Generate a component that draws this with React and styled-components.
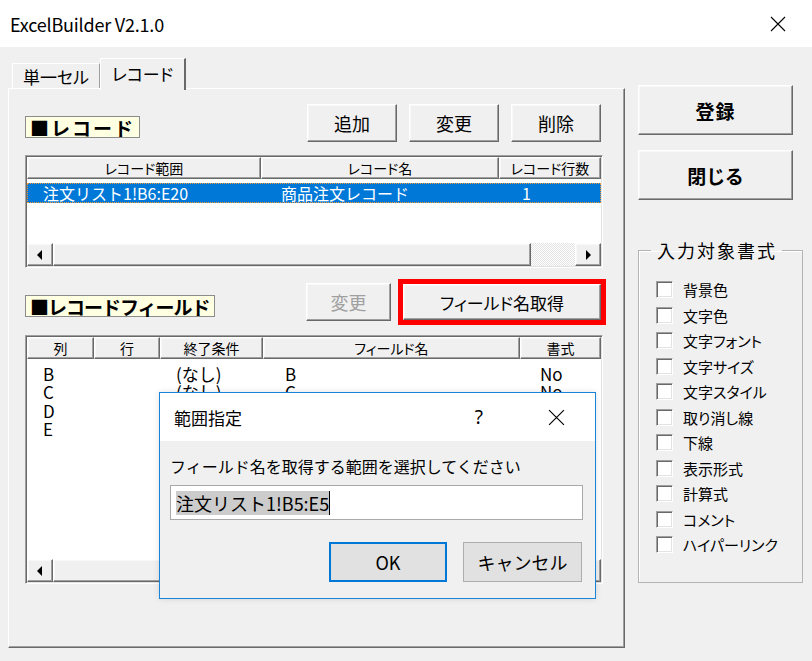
import React from "react";
import styled, { createGlobalStyle, css } from "styled-components";

const GlobalStyle = createGlobalStyle`
  html, body {
    margin: 0;
    padding: 0;
    background: #f0f0f0;
  }
  body {
    font-family: "Noto Sans CJK JP", "Noto Sans", sans-serif;
    color: #000;
  }
  * {
    box-sizing: border-box;
  }
`;

// classic 3D edges
const raised = css`
  border: 1px solid;
  border-color: #ffffff #696969 #696969 #ffffff;
  box-shadow: inset -1px -1px 0 #a0a0a0, inset 1px 1px 0 #f8f8f8;
  background: #f0f0f0;
`;

const sunken = css`
  border: 1px solid;
  border-color: #a0a0a0 #ffffff #ffffff #a0a0a0;
  box-shadow: inset 1px 1px 0 #696969, inset -1px -1px 0 #e3e3e3;
  padding: 1px;
`;

const Window = styled.div`
  position: relative;
  width: 812px;
  height: 661px;
  background: #f0f0f0;
  overflow: hidden;
`;

const TitleBar = styled.div`
  height: 47px;
  background: #ffffff;
  display: flex;
  align-items: center;
  justify-content: space-between;
  padding: 0 26px 0 10px;
`;

const TitleText = styled.span`
  font-size: 18px;
  letter-spacing: -0.2px;
`;

const Main = styled.div`
  display: flex;
  align-items: flex-start;
  padding: 11px 0 0 8px;
`;

const LeftPane = styled.div`
  width: 617px;
  display: flex;
  flex-direction: column;
`;

const TabStrip = styled.div`
  position: relative;
  z-index: 1;
  display: flex;
  align-items: flex-end;
  height: 30px;
  padding-left: 4px;
`;

const Tab = styled.div`
  display: flex;
  align-items: center;
  justify-content: center;
  width: ${(p) => p.$w}px;
  font-size: 17px;
  font-feature-settings: "palt";
  background: #f0f0f0;
  border: 1px solid;
  border-bottom: none;
  border-color: #ffffff #a0a0a0 transparent #ffffff;
  ${(p) =>
    p.$active
      ? css`
          height: 32px;
          margin-bottom: -2px;
          border-right: 2px solid #696969;
          padding-bottom: 3px;
        `
      : css`
          height: 25px;
          padding-top: 1px;
        `}
`;

const TabPanel = styled.div`
  width: 617px;
  height: 560px;
  border: 1px solid;
  border-color: #ffffff #696969 #696969 #ffffff;
  box-shadow: inset -1px -1px 0 #a0a0a0;
  padding: 15px 21px 0 16px;
  display: flex;
  flex-direction: column;
`;

const SectionRow = styled.div`
  display: flex;
  justify-content: space-between;
  align-items: center;
  height: ${(p) => p.$h}px;
  margin-top: ${(p) => p.$top}px;
  margin-right: ${(p) => p.$right}px;
`;

const SectionLabel = styled.div`
  align-self: flex-end;
  margin-bottom: ${(p) => p.$bottom}px;
  height: 22px;
  padding: 0 4px 0 4px;
  display: flex;
  align-items: center;
  background: #ffffe1;
  border: 1px solid #8c8c8c;
  font-size: 19px;
  font-weight: 700;
  line-height: 1;
  letter-spacing: ${(p) => p.$spacing}px;
`;

const ButtonGroup = styled.div`
  display: flex;
  align-items: center;
  gap: ${(p) => p.$gap}px;
`;

const ClassicButton = styled.div`
  ${raised};
  width: ${(p) => p.$w}px;
  height: ${(p) => p.$h}px;
  display: flex;
  align-items: center;
  justify-content: center;
  font-size: ${(p) => p.$size || 18}px;
  font-feature-settings: "palt";
  color: ${(p) => (p.$disabled ? "#a0a0a0" : "#000")};
  font-weight: ${(p) => (p.$bold ? 700 : 400)};
`;

const RedFrame = styled.div`
  border: 5px solid #ff0000;
  display: flex;
`;

const ListView = styled.div`
  ${sunken};
  margin-top: ${(p) => p.$top}px;
  height: ${(p) => p.$h}px;
  background: #ffffff;
  display: flex;
  flex-direction: column;
`;

const ListHeader = styled.div`
  display: flex;
  height: 22px;
  flex: none;
`;

const HeaderCell = styled.div`
  ${raised};
  width: ${(p) => p.$w}px;
  display: flex;
  align-items: center;
  justify-content: center;
  font-size: 14px;
  font-feature-settings: "palt";
  line-height: 1;
`;

const ListBody = styled.div`
  flex: 1;
  padding-top: ${(p) => p.$pad}px;
  display: flex;
  flex-direction: column;
`;

const ListRow = styled.div`
  display: flex;
  height: ${(p) => p.$h}px;
  align-items: center;
  ${(p) =>
    p.$selected &&
    css`
      background: #0078d7;
      color: #ffffff;
      outline: 1px dotted #f39a3c;
      outline-offset: -1px;
    `}
`;

const Cell = styled.div`
  width: ${(p) => p.$w}px;
  padding-left: ${(p) => p.$pad}px;
  font-size: ${(p) => p.$size}px;
  white-space: nowrap;
  line-height: 1;
`;

const HScroll = styled.div`
  display: flex;
  height: 23px;
  flex: none;
`;

const ScrollArrow = styled.div`
  ${raised};
  width: 26px;
  display: flex;
  align-items: center;
  justify-content: center;
`;

const ScrollThumb = styled.div`
  ${raised};
  width: ${(p) => p.$w}px;
`;

const ScrollTrack = styled.div`
  flex: 1;
  background: repeating-conic-gradient(#ffffff 0 25%, #e3e3e3 0 50%) 0 0 / 2px 2px;
`;

const RightPane = styled.div`
  width: 165px;
  margin-left: 13px;
  padding-top: 27px;
  display: flex;
  flex-direction: column;
`;

const BigButton = styled(ClassicButton)`
  margin-top: ${(p) => p.$top}px;
  letter-spacing: 1px;
`;

const GroupBox = styled.fieldset`
  margin: 40px 0 0 0;
  height: 343px;
  width: 165px;
  border: 1px solid #b4b4b4;
  box-shadow: 1px 1px 0 #ffffff inset;
  padding: 17px 0 0 17px;
`;

const Legend = styled.legend`
  margin-left: -5px;
  padding: 0 5px 0 6px;
  font-size: 18px;
  line-height: 20px;
  letter-spacing: 2px;
`;

const CheckRow = styled.div`
  display: flex;
  align-items: center;
  height: 25.5px;
`;

const CheckBox = styled.span`
  ${sunken};
  width: 17px;
  height: 17px;
  background: #ffffff;
  flex: none;
`;

const CheckLabel = styled.span`
  margin-left: 10px;
  font-size: 15px;
  font-feature-settings: "palt";
  line-height: 1;
`;

const Dialog = styled.div`
  position: absolute;
  left: 159px;
  top: 392px;
  width: 437px;
  height: 207px;
  border: 1px solid #1883d7;
  background: #f0f0f0;
  box-shadow: 0 0 6px rgba(0, 0, 0, 0.12);
  display: flex;
  flex-direction: column;
`;

const DialogTitle = styled.div`
  height: 48px;
  flex: none;
  background: #ffffff;
  display: flex;
  align-items: center;
  padding: 0 30px 0 14px;
  font-size: 17px;
`;

const DialogTitleText = styled.span`
  flex: 1;
`;

const HelpGlyph = styled.span`
  font-size: 19px;
  font-family: "Noto Sans", sans-serif;
  margin-right: 65px;
`;

const DialogBody = styled.div`
  padding: 13px 12px 0 10px;
  display: flex;
  flex-direction: column;
`;

const DialogLabel = styled.div`
  font-size: 16px;
  line-height: 24px;
`;

const DialogInput = styled.div`
  margin-top: 7px;
  width: 413px;
  height: 35px;
  background: #ffffff;
  border: 1px solid #a9a9a9;
  display: flex;
  align-items: center;
  padding-left: 5px;
  font-size: 18px;
`;

const Selection = styled.span`
  background: #cccccc;
  line-height: 24px;
`;

const Caret = styled.span`
  width: 1px;
  height: 24px;
  background: #000;
`;

const DialogButtons = styled.div`
  display: flex;
  justify-content: flex-end;
  gap: 16px;
  margin-top: 22px;
  padding-right: 1px;
`;

const DialogButton = styled.div`
  width: ${(p) => p.$w}px;
  height: 40px;
  background: #e1e1e1;
  border: ${(p) => (p.$primary ? "2px solid #0078d7" : "1px solid #adadad")};
  display: flex;
  align-items: center;
  justify-content: center;
  font-size: 18px;
`;

const CloseIcon = ({ size = 16 }) => (
  <svg width={size} height={size} viewBox="0 0 16 16">
    <path d="M1 1 L15 15 M15 1 L1 15" stroke="#000" strokeWidth="1.1" fill="none" />
  </svg>
);

const Arrow = ({ dir }) => (
  <svg width="6" height="10" viewBox="0 0 6 10">
    {dir === "left" ? <polygon points="5,0 5,10 0,5" fill="#000" /> : <polygon points="1,0 1,10 6,5" fill="#000" />}
  </svg>
);

const Scrollbar = ({ thumb }) => (
  <HScroll>
    <ScrollArrow>
      <Arrow dir="left" />
    </ScrollArrow>
    <ScrollThumb $w={thumb} />
    <ScrollTrack />
    <ScrollArrow>
      <Arrow dir="right" />
    </ScrollArrow>
  </HScroll>
);

const recordCols = [
  { name: "レコード範囲", w: 234, pad: 16 },
  { name: "レコード名", w: 238, pad: 20 },
  { name: "レコード行数", w: 102, pad: 23 }
];

const fieldCols = [
  { name: "列", w: 67, pad: 16 },
  { name: "行", w: 66, pad: 16 },
  { name: "終了条件", w: 103, pad: 16 },
  { name: "フィールド名", w: 257, pad: 22 },
  { name: "書式", w: 81, pad: 20 }
];

const fields = [
  ["B", "", "(なし)", "B", "No"],
  ["C", "", "(なし)", "C", "No"],
  ["D", "", "(なし)", "D", "No"],
  ["E", "", "(なし)", "E", "No"]
];

const formats = [
  "背景色",
  "文字色",
  "文字フォント",
  "文字サイズ",
  "文字スタイル",
  "取り消し線",
  "下線",
  "表示形式",
  "計算式",
  "コメント",
  "ハイパーリンク"
];

const App = () => {
  return (
    <Window>
      <GlobalStyle />
      <TitleBar>
        <TitleText>ExcelBuilder V2.1.0</TitleText>
        <CloseIcon />
      </TitleBar>
      <Main>
        <LeftPane>
          <TabStrip>
            <Tab $w={88}>単一セル</Tab>
            <Tab $w={86} $active>
              レコード
            </Tab>
          </TabStrip>
          <TabPanel>
            <SectionRow $h={38} $top={0} $right={2}>
              <SectionLabel $bottom={4} $spacing={2}>
                ■レコード
              </SectionLabel>
              <ButtonGroup $gap={12}>
                <ClassicButton $w={90} $h={38}>
                  追加
                </ClassicButton>
                <ClassicButton $w={90} $h={38}>
                  変更
                </ClassicButton>
                <ClassicButton $w={90} $h={38}>
                  削除
                </ClassicButton>
              </ButtonGroup>
            </SectionRow>
            <ListView $top={13} $h={113}>
              <ListHeader>
                {recordCols.map((c) => (
                  <HeaderCell key={c.name} $w={c.w}>
                    {c.name}
                  </HeaderCell>
                ))}
              </ListHeader>
              <ListBody $pad={4}>
                <ListRow $h={20} $selected>
                  <Cell $w={recordCols[0].w} $pad={recordCols[0].pad} $size={16}>
                    注文リスト1!B6:E20
                  </Cell>
                  <Cell $w={recordCols[1].w} $pad={recordCols[1].pad} $size={16}>
                    商品注文レコード
                  </Cell>
                  <Cell $w={recordCols[2].w} $pad={recordCols[2].pad} $size={16}>
                    1
                  </Cell>
                </ListRow>
              </ListBody>
              <Scrollbar thumb={478} />
            </ListView>

            <SectionRow $h={46} $top={11} $right={-3}>
              <SectionLabel $bottom={8} $spacing={-1}>
                ■レコードフィールド
              </SectionLabel>
              <ButtonGroup $gap={7}>
                <ClassicButton $w={85} $h={38} $disabled>
                  変更
                </ClassicButton>
                <RedFrame>
                  <ClassicButton $w={198} $h={36} $size={17}>
                    フィールド名取得
                  </ClassicButton>
                </RedFrame>
              </ButtonGroup>
            </SectionRow>
            <ListView $top={10} $h={249}>
              <ListHeader>
                {fieldCols.map((c) => (
                  <HeaderCell key={c.name} $w={c.w}>
                    {c.name}
                  </HeaderCell>
                ))}
              </ListHeader>
              <ListBody $pad={5}>
                {fields.map((row) => (
                  <ListRow key={row[0]} $h={18.5}>
                    {row.map((v, i) => (
                      <Cell key={i} $w={fieldCols[i].w} $pad={fieldCols[i].pad} $size={17}>
                        {v}
                      </Cell>
                    ))}
                  </ListRow>
                ))}
              </ListBody>
              <Scrollbar thumb={478} />
            </ListView>
          </TabPanel>
        </LeftPane>

        <RightPane>
          <BigButton $w={155} $h={50} $size={19} $bold $top={0}>
            登録
          </BigButton>
          <BigButton $w={155} $h={50} $size={19} $bold $top={15}>
            閉じる
          </BigButton>
          <GroupBox>
            <Legend>入力対象書式</Legend>
            {formats.map((f) => (
              <CheckRow key={f}>
                <CheckBox />
                <CheckLabel>{f}</CheckLabel>
              </CheckRow>
            ))}
          </GroupBox>
        </RightPane>
      </Main>

      <Dialog>
        <DialogTitle>
          <DialogTitleText>範囲指定</DialogTitleText>
          <HelpGlyph>?</HelpGlyph>
          <CloseIcon size={17} />
        </DialogTitle>
        <DialogBody>
          <DialogLabel>フィールド名を取得する範囲を選択してください</DialogLabel>
          <DialogInput>
            <Selection>注文リスト1!B5:E5</Selection>
            <Caret />
          </DialogInput>
          <DialogButtons>
            <DialogButton $w={118} $primary>
              OK
            </DialogButton>
            <DialogButton $w={119}>キャンセル</DialogButton>
          </DialogButtons>
        </DialogBody>
      </Dialog>
    </Window>
  );
};

export default App;
